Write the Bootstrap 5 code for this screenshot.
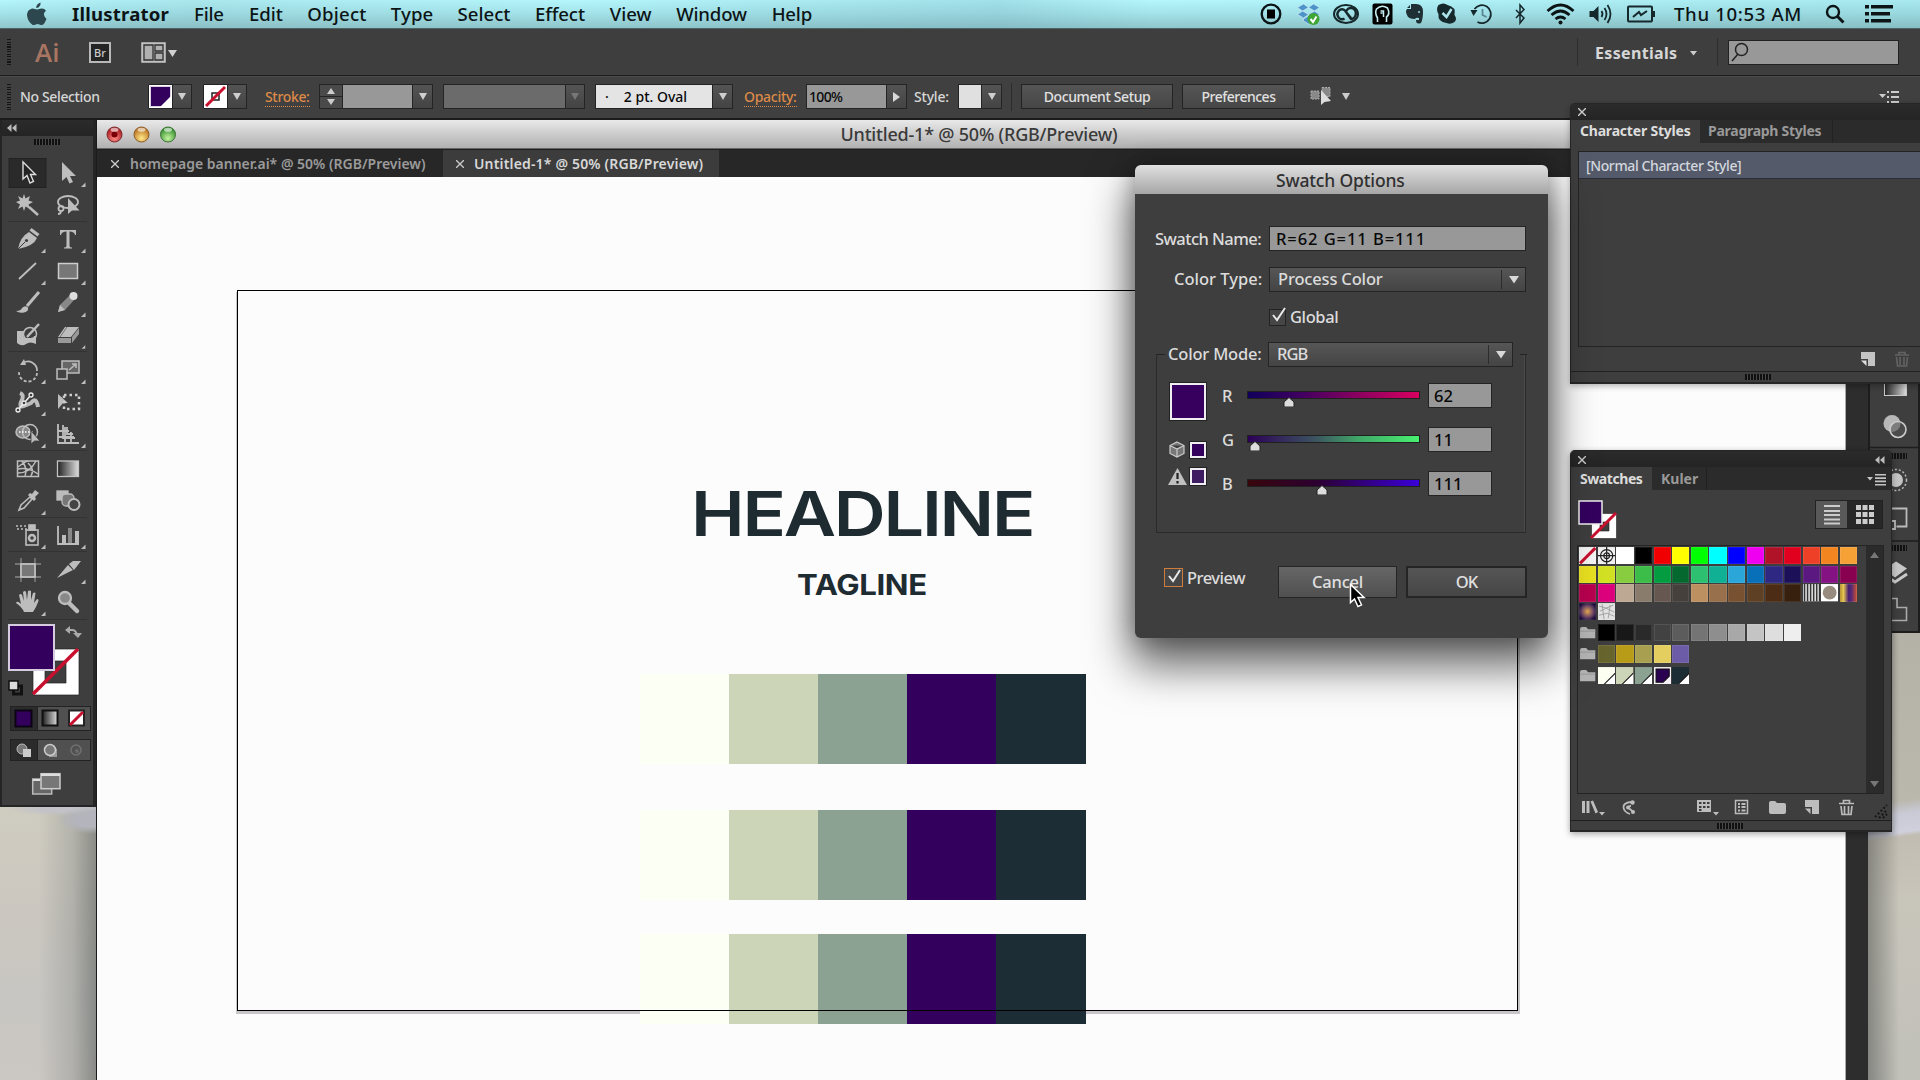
<!DOCTYPE html>
<html lang="en">
<head>
<meta charset="utf-8">
<title>Illustrator</title>
<link href="https://cdn.jsdelivr.net/npm/bootstrap@5.3.0/dist/css/bootstrap.min.css" rel="stylesheet">
<style>
:root{--ui:#3e3e3e;--edge:#1e1e1e;--ink:#d6d6d6;--violet:#33005e}
html,body{margin:0;width:1920px;height:1080px;overflow:hidden}
body{position:relative;font-family:"Noto Sans","Open Sans",sans-serif;font-weight:500;font-size:14px;line-height:1;color:var(--ink);background:#c4c3be}
svg{display:block;flex:none}
.fit{display:inline-block;white-space:pre;flex:none}
.win{position:absolute;display:flex;flex-direction:column}
.wall-l{left:0;top:806px;width:97px;height:274px;background:radial-gradient(ellipse 36px 14px at 92px 14px,#b4b5bc 50%,transparent),radial-gradient(ellipse 60px 7px at 66px 3px,#c2c2c8 40%,transparent),linear-gradient(90deg,transparent 40%,rgba(110,116,114,.28) 75%,rgba(80,86,84,.55)),linear-gradient(#cfccc0,#cbc7c0 40%,#c8c6c2 70%,#cbc7c2)}
.wall-r{left:1868px;top:632px;width:52px;height:448px;background:linear-gradient(90deg,rgba(60,64,62,.45),transparent 60%),linear-gradient(172deg,#b4b1a6,#bab7ac 38%,#c9cad6 41%,#d0d0dc 45%,#c2bdb2 46%,#c8c5bb 60%,#c1c0b9)}
/* menu bar */
.menubar{left:0;top:0;width:1920px;height:29px;color:#0c1416;font-size:18.6px;background:linear-gradient(90deg,rgba(255,255,255,0) 0,rgba(120,165,175,.18) 10%,rgba(255,255,255,0) 30%,rgba(110,160,180,.25) 52%,rgba(255,255,255,0) 60%,rgba(60,120,130,.1) 100%),linear-gradient(#b4f6fb,#a4e4ea 45%,#8fc6cb);border-bottom:1px solid #4d6467}
/* app bars */
.appbar{left:0;top:29px;width:1920px;height:47px;background:var(--ui);border-bottom:1px solid var(--edge)}
.optbar{left:0;top:76px;width:1920px;height:44px;padding-bottom:2px;background:#404040;border-top:1px solid #4b4b4b;border-bottom:2px solid #1c1c1c;font-size:14px}
.grip-v{width:4px;height:26px;background:repeating-linear-gradient(#161616 0 1px,transparent 1px 2.5px)}
.grip-h{width:26px;height:6px;background:repeating-linear-gradient(90deg,#101010 0 2px,#4a4a4a 2px 3px)}
.vline{width:1px;height:28px;background:#2c2c2c}
.ai-logo{font:600 26px/1 "Open Sans",sans-serif;color:#a87562}
.br-logo{width:22px;height:21px;border:2px solid #b9b9b9;background:#242424;font-size:11px;color:#ccc}
.find{width:171px;height:25px;background:#989898;border:1px solid #222}
.dd{background:linear-gradient(#545454,#444);border:1px solid #242424;height:25px}
.dd::after{content:"";border:4px solid transparent;border-top:7px solid #cfcfcf;border-bottom:0}
.dd.off::after{border-top-color:#777}
.dd.side::after{border:5px solid transparent;border-left:7px solid #d8d8d8;border-right:0}
.fld{height:25px;background:#989898;border:1px solid #242424;color:#080808}
.hot{color:#dd8a48;border-bottom:1px dotted #dd8a48;padding-bottom:2px}
.btn.flat{height:25px;border:1px solid #232323;border-radius:0;background:linear-gradient(#555,#464646);color:#e0e0e0;padding:0;font-size:14px;font-weight:500;line-height:1}
/* toolbox */
.toolbox{left:0;top:120px;width:96px;height:687px;background:var(--ui);border:1px solid #252525;border-width:0 3px 2px 2px}
.headbar{background:linear-gradient(#2b2b2b,#242424)}
.tsec{border-bottom:1px solid #333;margin:0 6px;display:grid;grid-template-columns:40px 40px;grid-auto-rows:32px}
.tool{width:40px;height:32px;color:#bdbdbd}
/* document */
.doc{left:96px;top:120px;width:1772px;height:960px;background:#2d2d2d;border-left:1px solid #1b1b1b}
.titlebar{height:29px;background:linear-gradient(#e9e9e9,#cfcfcf 45%,#b1b1b1);border-bottom:1px solid #666;color:#3a3a3a;font-size:18px}
.tabs{height:28px;background:#272727;border-top:1px solid #1e1e1e;font-size:14px;font-weight:600;color:#9b9b9b}
.tab-on{background:#3c3c3c;color:#d8d8d8}
.canvas{width:1749px;height:903px;background:#fdfcfd;border-right:1px solid #aaa}
.artboard{position:absolute;left:140px;top:170px;width:1281px;height:721px;border:1px solid #000}
.artboard-shade{position:absolute;left:139px;top:172px;width:1284px;height:722px;background:#fdfcfd;border:solid #c9c6c9;border-width:0 2px 3px 1px}
.artwork{position:absolute;left:543px;top:360px;width:447px}
.head-t{font-family:Inter,sans-serif;font-weight:600;font-size:62px;color:#1e2b31;height:46px}
.head-t .fit{transform:scaleX(1.16);transform-origin:left}
.tag-t{font-family:Inter,sans-serif;font-weight:700;font-size:28.3px;color:#1e2b31;height:21px}
.tag-t .fit{transform:scaleX(1.1);transform-origin:left}
.strip{display:grid;grid-template-columns:88.5px 89px 89px 89.5px 90px;height:90px}
/* dock */
.dock{left:1868px;top:384px;width:52px;height:249px;background:var(--ui);border:1px solid #1d1d1d;border-width:0 2px 2px 2px}
/* panels */
.panel{background:var(--ui);border:2px solid #262626;color:var(--ink)}
.panel .x-head{height:16px;border-radius:4px 4px 0 0}
.ptabs{height:23px;background:#2b2b2b;font-weight:700;font-size:14px;color:#999}
.ptabs .on{background:var(--ui);color:#ddd}
.char{left:1570px;top:103px;width:352px;height:281px;border-radius:5px 0 0 0;border-width:1px 0 2px 1px;box-shadow:0 2px 6px rgba(0,0,0,.3)}
.listbox{border:1px solid #242424}
.picked{background:#545a69;height:27px;border-bottom:1px solid #2a2d35;color:#d3d7de}
.swp{left:1570px;top:450px;width:322px;height:382px;border-width:1px 1px 2px 1px;border-radius:5px 5px 0 0;box-shadow:0 2px 6px rgba(0,0,0,.35)}
.cells{display:flex;gap:1.34px;height:17.4px}
.cells>*{width:17.3px;height:17.4px;flex:none}
.cells>i{box-shadow:inset 0 0 0 1px rgba(255,255,255,.09)}
/* dialog */
.dlg{left:1135px;top:165px;width:413px;height:473px;border-radius:6px;background:var(--ui);box-shadow:0 24px 44px 4px rgba(0,0,0,.6),0 0 24px rgba(0,0,0,.3);font-size:16.5px;color:#dcdcdc;overflow:visible}
.dlg-title{height:29px;padding-top:2px;border-radius:6px 6px 0 0;background:linear-gradient(#e0e0e0,#c9c9c9 40%,#a6a6a6);color:#303030;font-size:17.5px}
.dlg .fld{font-size:16.5px}
.pick{background:linear-gradient(#565656,#444);border:1px solid #242424;height:25px}
.cb{width:17px;height:17px;border:1px solid #232323;background:#464646}
.frame{border:1px solid #2a2a2a;border-top:0;box-shadow:inset -1px 0 #4a4a4a;margin-left:21px;width:370px;height:179px;position:relative}
.slide{width:173px;height:8px;border:1px solid #202020}
.knob{position:absolute;top:7px;width:12px;height:10px;margin-left:-6px}
.dlg .btn.flat{height:32px;font-size:16.5px;border-color:#252525}
.chip{border:2px solid #f0eef2;outline:1px solid #222}
</style>
</head>
<body>
<div class="win wall-l"></div>
<div class="win wall-r"></div>

<!-- document window -->
<main class="win doc">
  <div class="titlebar d-flex align-items-center position-relative justify-content-center">
    <svg class="position-absolute start-0" width="90" height="28" viewBox="0 0 90 28">
      <defs>
        <radialGradient id="lr" cx=".5" cy=".75" r=".7"><stop offset="0" stop-color="#ff8a86"/><stop offset="1" stop-color="#a3141b"/></radialGradient>
        <radialGradient id="ly" cx=".5" cy=".75" r=".7"><stop offset="0" stop-color="#ffe98a"/><stop offset="1" stop-color="#b66b18"/></radialGradient>
        <radialGradient id="lg" cx=".5" cy=".75" r=".7"><stop offset="0" stop-color="#c4f5a0"/><stop offset="1" stop-color="#2f8a2a"/></radialGradient>
      </defs>
      <circle cx="17.500" cy="14.500" r="7.500" fill="url(#lr)" stroke="#7c2a2c"/><circle cx="44.500" cy="14.500" r="7.500" fill="url(#ly)" stroke="#8a5a28"/><circle cx="71" cy="14.500" r="7.500" fill="url(#lg)" stroke="#3d7236"/>
      <circle cx="17.500" cy="14.500" r="3" fill="#7a0008"/><g fill="#fff" opacity=".6"><ellipse cx="17.500" cy="9.800" rx="4" ry="2"/><ellipse cx="44.500" cy="9.800" rx="4" ry="2"/><ellipse cx="71" cy="9.800" rx="4" ry="2"/></g>
    </svg>
    <span class="fit" data-w="277" style="margin-right:7px">Untitled-1* @ 50% (RGB/Preview)</span>
  </div>
  <div class="tabs d-flex">
    <div class="d-flex align-items-center" style="width:346px;padding-left:14px"><svg width="8" height="8" stroke="#ccc" stroke-width="1.300"><path d="M0 0l8 8M8 0l-8 8"/></svg><span class="fit" data-w="296" style="margin-left:11px">homepage banner.ai* @ 50% (RGB/Preview)</span></div>
    <div class="tab-on d-flex align-items-center" style="width:276px;padding-left:13px"><svg width="8" height="8" stroke="#ccc" stroke-width="1.300"><path d="M0 0l8 8M8 0l-8 8"/></svg><span class="fit" data-w="229" style="margin-left:10px">Untitled-1* @ 50% (RGB/Preview)</span></div>
  </div>
  <div class="canvas"></div>
  <div class="artboard-shade"></div>
  <div class="artwork d-flex flex-column">
    <div class="head-t d-flex align-items-center" style="margin-top:11px;padding-left:51px"><span class="fit" data-w="296.500">HEADLINE</span></div>
    <div class="tag-t d-flex align-items-center" style="margin-top:38px;padding-left:157px"><span class="fit" data-w="118">TAGLINE</span></div>
    <div class="strip" style="margin-top:78px"></div>
    <div class="strip" style="margin-top:46px"></div>
    <div class="strip" style="margin-top:34px"></div>
  </div>
  <div class="artboard"></div>
</main>

<!-- collapsed dock -->
<aside class="win dock">
  <svg width="48" height="247" viewBox="1870 384 48 247">
    <defs><linearGradient id="gd"><stop offset="0" stop-color="#222"/><stop offset="1" stop-color="#ddd"/></linearGradient></defs>
    <rect x="1884.500" y="374" width="22" height="21.500" fill="url(#gd)" stroke="#c8c8c8"/>
    <circle cx="1892" cy="423.500" r="8.500" fill="#b8b8b8"/><circle cx="1898" cy="429.500" r="8" fill="#555" fill-opacity=".6" stroke="#ccc" stroke-width="1.600"/>
    <path d="M1870 447.500h48M1870 541h48" stroke="#1e1e1e" stroke-width="1.500"/>
    <g fill="none" stroke="#111" stroke-width="6" stroke-dasharray="2 1"><path d="M1882 456h25M1882 548h25"/></g>
    <circle cx="1896" cy="480" r="7" fill="#c4c4c4"/><circle cx="1896" cy="480" r="10.500" fill="none" stroke="#bbb" stroke-width="1.500" stroke-dasharray="2 2"/>
    <path d="M1885 508.500h21.500v18h-10M1885 521h10v8h-10z" fill="none" stroke="#bbb" stroke-width="1.800"/>
    <path d="M1896 561.500l11 7-12 9-11-8z" fill="#c8c8c8"/><path d="M1886 576l9 6 12-8" fill="none" stroke="#c8c8c8" stroke-width="3"/>
    <path d="M1884 598.500h13v9h9.500v13h-20z" fill="none" stroke="#aaa" stroke-width="1.600"/>
  </svg>
</aside>

<!-- toolbox -->
<aside class="win toolbox">
  <div class="headbar d-flex align-items-center" style="height:16px;padding-left:5px"><svg width="10" height="8" fill="#bbb"><path d="M4.500 0v8L0 4zM9.500 0v8L5 4z"/></svg></div>
  <div class="d-flex justify-content-center" style="height:21px;padding:3px 2px 0 0"><div class="grip-h"></div></div>
  <div class="tsec" style="height:65px">
    <svg class="tool" viewBox="-20 -16 40 32"><rect x="-19" y="-14.500" width="37" height="29" fill="#2a2a2a" stroke="#222"/><path d="M-5-11V6l4-3.500 3 7.500 3.500-1.500L2.500 1.500h5z" fill="#222" stroke="#ddd" stroke-width="1.400"/></svg>
    <svg class="tool" viewBox="-20 -16 40 32" fill="currentColor"><path d="M-6-11V8l4.500-4 3 6.500 3.500-1.500L2 3h6zM13 14h4.500V9.500z"/></svg>
    <svg class="tool" viewBox="-20 -16 40 32" fill="currentColor"><path d="M-4-11l1.500 4.500L2-9 .5-4.500 5-3 .5-.5 2 4-2.500 1.500-4 6-5.500 1.500-10 4-8-.5-12-3l4-1.500L-10-9l4.500 2.500z"/><path d="M1 2l9 8" stroke="currentColor" stroke-width="2.500"/></svg>
    <svg class="tool" viewBox="-20 -16 40 32" fill="none" stroke="currentColor" stroke-width="1.800"><ellipse cx="0" cy="-3" rx="10" ry="6"/><circle cx="-7" cy="3.500" r="2.500"/><path d="M-7 6q0 3-3 3"/><path d="M0-7V9l4-3.500 7.500 0z" fill="currentColor" stroke="none"/></svg>
  </div>
  <div class="tsec" style="height:130px;padding-top:1px">
    <svg class="tool" viewBox="-20 -16 40 32" fill="currentColor"><path d="M-10 10Q-8-2 1-7l8 6Q6 7-10 10zM1.500-8.500l2-2.500 8 6-2 2.500zM13 14h4.500V9.500z"/><path d="M-10 10l7-7" stroke="#3e3e3e"/><circle cx="-1.500" cy="1.500" r="1.600" fill="#3e3e3e"/></svg>
    <svg class="tool" viewBox="-20 -16 40 32" fill="currentColor"><path d="M-8-9H8v5H7Q6.500-7.500 1.500-7.500V7q0 1.500 2.500 1.500v1h-8v-1q2.500 0 2.500-1.500V-7.500Q-6.500-7.500-7-4h-1zM13 14h4.500V9.500z"/></svg>
    <svg class="tool" viewBox="-20 -16 40 32" fill="currentColor"><path d="M-9 8L8-8" stroke="currentColor" stroke-width="1.800"/><path d="M13 14h4.500V9.500z"/></svg>
    <svg class="tool" viewBox="-20 -16 40 32"><rect x="-9.500" y="-7.500" width="19" height="15" fill="#777" stroke="#ccc" stroke-width="1.500"/><path fill="#bdbdbd" d="M13 14h4.500V9.500z"/></svg>
    <svg class="tool" viewBox="-20 -16 40 32" fill="currentColor"><path d="M11-11L-1 3" stroke="currentColor" stroke-width="3"/><path d="M-12 8q5 0 6-3 3-3 6-.500 1 4-4 5-5 1-8-1.500z"/></svg>
    <svg class="tool" viewBox="-20 -16 40 32" fill="currentColor"><path d="M-10 9l2-7L2-8l5 4L-3 7z" fill="#888"/><path d="M-10 9l2-7 5 5z"/><circle cx="5.500" cy="-7" r="4" fill="#ddd"/><path d="M13 14h4.500V9.500z"/></svg>
    <svg class="tool" viewBox="-20 -16 40 32" fill="currentColor"><path d="M-11-4h8Q-8 4 0 3q6 0 6-2h2v8Q2 6-2 9t-9-1z"/><path d="M11-11L-1 2" stroke="currentColor" stroke-width="2.500"/><circle cx="2" cy="-1" r="6.500" fill="none" stroke="currentColor" stroke-width="1.500"/></svg>
    <svg class="tool" viewBox="-20 -16 40 32" fill="currentColor"><path d="M-3-8h14L3 2h-13z" /><path d="M-10 3h13v5h-13zM4 2l7-9v6L4 8z" fill="#999"/><path d="M-1-8l-7 10M13 14h4.500V9.500z" stroke="#3e3e3e" stroke-width=".6"/></svg>
  </div>
  <div class="tsec" style="height:99px;padding-top:2px">
    <svg class="tool" viewBox="-20 -16 40 32" fill="none" stroke="currentColor" stroke-width="1.800"><path d="M-5-7A9 9 0 0 1 9 1"/><path d="M9 3A9 9 0 0 1-9 2" stroke-dasharray="3 2"/><path d="M-8-5l4-6 2 6z" fill="currentColor" stroke="none"/><path fill="currentColor" stroke="none" d="M13 14h4.500V9.500z"/></svg>
    <svg class="tool" viewBox="-20 -16 40 32" fill="#666" stroke="currentColor" stroke-width="1.500"><rect x="-6" y="-9" width="17" height="12"/><rect x="-11" y="-1" width="10" height="10" fill="#444"/><path d="M1 0l7-6M4-6h4v4"/><path fill="#bdbdbd" stroke="none" d="M13 14h4.500V9.500z"/></svg>
    <svg class="tool" viewBox="-20 -16 40 32" fill="none" stroke="currentColor" stroke-width="4"><path d="M-8-9q5 2 1 9-2 6 3 4T3 1Q8-6 10 5"/><path d="M-10 8L3-7" stroke="#eee" stroke-width="1.500"/><g fill="#3e3e3e" stroke="#eee" stroke-width="1.300"><circle cx="-10" cy="8" r="2"/><circle cx="-4" cy="1" r="2"/><circle cx="3" cy="-7" r="2"/></g><path fill="currentColor" stroke="none" d="M13 14h4.500V9.500z"/></svg>
    <svg class="tool" viewBox="-20 -16 40 32" fill="currentColor"><path d="M-10-8L0 1h-5l-5 6z"/><g fill="none" stroke="#ccc" stroke-width="2.500" stroke-dasharray="2.500 3"><path d="M-4-7H11V7H-4z"/></g></svg>
    <svg class="tool" viewBox="-20 -16 40 32" fill="none" stroke="currentColor" stroke-width="1.500"><ellipse cx="-5" cy="-2" rx="7" ry="6" fill="#888"/><circle cx="2" cy="-2" r="7.500"/><path d="M-9-2H5" stroke-dasharray="1.500 1.500" stroke="#fff"/><path d="M3-3V10l3.500-3 5.500 0z" fill="currentColor" stroke="#3e3e3e" stroke-width=".8"/><path fill="currentColor" stroke="none" d="M13 14h4.500V9.500z"/></svg>
    <svg class="tool" viewBox="-20 -16 40 32" fill="none" stroke="currentColor" stroke-width="1.800"><path d="M-10-10v19h21M-5-9V4H7M-1-7v7h6M-10-3h11M-10 3h16M-3-7v15M3-2v10"/><path fill="currentColor" stroke="none" d="M13 14h4.500V9.500z"/></svg>
  </div>
  <div class="tsec" style="height:67px;padding-top:2px">
    <svg class="tool" viewBox="-20 -16 40 32" fill="none" stroke="currentColor" stroke-width="1.500"><rect x="-10.500" y="-8" width="21" height="15.500"/><path d="M-10-2Q-2-8 0-8M-10 4Q2 4 8-8M-6-8Q0 0-3 7M0-6q7 6 3 13M-10 0q10-2 20 5"/></svg>
    <svg class="tool" viewBox="-20 -16 40 32"><rect x="-10.500" y="-8" width="21" height="15.500" fill="url(#gd)" stroke="#c4c4c4" stroke-width="1.300"/></svg>
    <svg class="tool" viewBox="-20 -16 40 32" fill="currentColor"><path d="M-9 9l2-5L2-4l2 2-8 9z" fill="none" stroke="currentColor" stroke-width="1.600"/><path d="M0-6l2-2 2 1 3-4 4 3-4 4 1 2-2 2zM13 14h4.500V9.500z"/></svg>
    <svg class="tool" viewBox="-20 -16 40 32" stroke="currentColor" stroke-width="1.300"><rect x="-11" y="-10" width="11" height="9" fill="#bbb"/><rect x="-6" y="-7" width="12" height="12" rx="4" fill="#777"/><circle cx="6" cy="3.500" r="5.500" fill="#444" stroke-width="2"/></svg>
  </div>
  <div class="tsec" style="height:34px;padding-top:1px">
    <svg class="tool" viewBox="-20 -16 40 32" fill="none" stroke="currentColor" stroke-width="1.600"><rect x="-2" y="-5" width="12" height="15"/><rect x="1" y="-10" width="6" height="5" fill="currentColor"/><circle cx="4" cy="3" r="3" stroke-width="2.500"/><path d="M-12-9h11M-11-6h10" stroke-dasharray="2 2"/><path fill="currentColor" stroke="none" d="M13 14h4.500V9.500z"/></svg>
    <svg class="tool" viewBox="-20 -16 40 32" fill="currentColor"><path d="M-10-9V9H11" fill="none" stroke="currentColor" stroke-width="1.800"/><path d="M-6 0h4v8h-4zM7-4h4V8H7zM13 14h4.500V9.500z"/><path d="M0-7h4V8H0z" fill="#888"/></svg>
  </div>
  <div class="tsec" style="height:68px;padding-top:2px">
    <svg class="tool" viewBox="-20 -16 40 32" fill="none"><path d="M-7-12v24M7-12v24M-13-6h26M-13 7h26" stroke="#888" stroke-width="1.300"/><rect x="-7" y="-6" width="14" height="13" fill="#777" stroke="#ccc" stroke-width="1.500"/></svg>
    <svg class="tool" viewBox="-20 -16 40 32" fill="currentColor"><path d="M-11 8L0-5l5 5zM1-6l4-3h8L6 0zM13 14h4.500V9.500z"/></svg>
    <svg class="tool" viewBox="-20 -16 40 32" fill="currentColor"><path d="M-4 10q-2-5-8-9 1-3 5 1L-9-7q2-2 3 0l2 6-1-9q2-2 3 0l1 8 1-9q2-1 3 0L3-2l2-7q2-1 2.500 0L6 1l3-4q2 0 1.500 2Q8 6 5 10zM13 14h4.500V9.500z"/></svg>
    <svg class="tool" viewBox="-20 -16 40 32" fill="none"><path d="M1 1l8 8" stroke="currentColor" stroke-width="4.500" stroke-linecap="round"/><circle cx="-3" cy="-4" r="6" fill="#888" stroke="currentColor" stroke-width="2.300"/></svg>
  </div>
  <svg width="91" height="184" viewBox="3 621 91 184">
    <path d="M34 650h46v46H34zM46 662v22h21v-22z" fill="#fff" fill-rule="evenodd" stroke="#222" stroke-width=".7"/><path d="M34 695L79 650" stroke="#c8102e" stroke-width="3.500"/>
    <rect x="10" y="626" width="45" height="45" fill="#33005e" stroke="#d6cce0" stroke-width="2"/>
    <g fill="none" stroke="#aaa" stroke-width="2"><path d="M69 631h4q4 0 5 5"/></g><path d="M66 631l5-4v8zM74 634h9l-4 5z" fill="#aaa"/>
    <rect x="14.500" y="687" width="8" height="8" fill="none" stroke="#111" stroke-width="3"/><rect x="10" y="682" width="9" height="9" fill="#ddd" stroke="#111" stroke-width="1.500"/>
    <g transform="translate(1 1)">
    <g stroke="#222"><rect x="10.500" y="706.500" width="80" height="24" fill="#505050"/><rect x="10.500" y="706.500" width="27" height="24" fill="#2b2b2b"/><rect x="15.500" y="710.500" width="16" height="16" fill="#33005e" stroke="#0c0414" stroke-width="2"/><rect x="42.500" y="710.500" width="15" height="15" fill="url(#gd)" stroke-width="2" stroke="#111"/><rect x="69" y="710.500" width="15" height="15" fill="#fff" stroke-width="2"/></g><path d="M70 725l13-13" stroke="#c8102e" stroke-width="3"/>
    <g stroke="#222"><rect x="10.500" y="739.500" width="80" height="21" fill="#505050"/><rect x="10.500" y="739.500" width="27" height="21" fill="#2b2b2b"/></g>
    <circle cx="22" cy="749" r="5" fill="#777" stroke="#bbb"/><rect x="23" y="749" width="8" height="8" fill="#ccc"/><rect x="49" y="749" width="8" height="8" fill="#999"/><circle cx="50" cy="750" r="5.500" fill="#777" stroke="#ccc" stroke-width="1.500"/><circle cx="76" cy="750" r="5" fill="none" stroke="#707070" stroke-width="1.500"/><circle cx="77" cy="751" r="2" fill="#6a6a6a"/>
    <rect x="32.700" y="779" width="19" height="15" fill="#666" stroke="#bbb" stroke-width="1.500"/><rect x="41" y="773.700" width="19" height="15" fill="#777" stroke="#ccc" stroke-width="1.500"/><path d="M41 775h19M33 780h7" stroke="#ddd" stroke-width="2"/>
    </g>
  </svg>
</aside>

<!-- application bar -->
<div class="win appbar flex-row align-items-center">
  <div class="grip-v" style="margin-left:7px"></div>
  <span class="ai-logo fit" data-w="24" style="margin-left:24px">Ai</span>
  <div class="br-logo d-flex align-items-center justify-content-center" style="margin-left:30px">Br</div>
  <svg width="37" height="21" style="margin-left:30px"><path d="M1 1h23v19H1z" fill="#aaa" stroke="#c8c8c8" stroke-width="1.500"/><path d="M3 3h9v15H3zM14 3h8v6h-8zM14 11h8v7h-8z" fill="#b0b0b0" stroke="#333" stroke-width="1.300"/><path d="M27 8h9l-4.500 7z" fill="#d0d0d0"/></svg>
  <div class="vline ms-auto"></div>
  <span class="fit fw-bold" data-w="82" style="margin:2px 0 0 17px;font-size:16px">Essentials</span>
  <svg width="8" height="5" style="margin:2px 0 0 13px"><path d="M0 0h7L3.500 4.500z" fill="#ccc"/></svg>
  <div class="vline" style="margin-left:19px"></div>
  <div class="find" style="margin:0 21px 0 10px"><svg width="22" height="23" fill="none" stroke="#222" stroke-width="1.500"><circle cx="12.500" cy="8.500" r="6"/><path d="M9 13l-6 7"/></svg></div>
</div>

<!-- control bar -->
<div class="win optbar flex-row align-items-center">
  <div class="grip-v" style="margin-left:7px"></div>
  <span class="fit" data-w="80" style="margin-left:9px">No Selection</span>
  <svg width="25" height="25" style="margin-left:48px"><path d="M.5.500h24v24H.5z" fill="#fff" stroke="#222"/><path d="M2.500 2.500h20v11l-9 9h-11z" fill="#33005e" stroke="#d9d0e2"/><path d="M23 12v11H12z" fill="#fff"/></svg>
  <div class="dd d-flex align-items-center justify-content-center" style="width:20px;margin-left:-1px"></div>
  <svg width="25" height="25" style="margin-left:11px"><path d="M.5.500h24v24H.5z" fill="#fff" stroke="#222"/><path d="M9 9h7v7H9z" fill="none" stroke="#222" stroke-width="1.500"/><path d="M3 22L22 3" stroke="#c8102e" stroke-width="3"/></svg>
  <div class="dd d-flex align-items-center justify-content-center" style="width:20px;margin-left:-1px"></div>
  <span class="fit hot" data-w="45" style="margin-left:18px;margin-top:3px">Stroke:</span>
  <svg width="24" height="25" style="margin-left:9px"><path d="M.5.500h23v24H.5zM0 12.500h24" fill="#4a4a4a" stroke="#242424"/><path d="M8 10h8l-4-6zM8 15h8l-4 6z" fill="#ccc"/></svg>
  <div class="fld" style="width:71px;margin-left:-1px"></div>
  <div class="dd d-flex align-items-center justify-content-center" style="width:21px;margin-left:-1px"></div>
  <div class="fld" style="width:123px;margin-left:10px;background:#6b6b6b"></div>
  <div class="dd off d-flex align-items-center justify-content-center" style="width:20px;margin-left:-1px"></div>
  <div class="fld d-flex align-items-center" style="width:118px;margin-left:10px;background:#e4e4e4;padding-left:9px"><span>·</span><span class="fit" data-w="63" style="margin-left:15px">2 pt. Oval</span></div>
  <div class="dd d-flex align-items-center justify-content-center" style="width:21px;margin-left:-1px"></div>
  <span class="fit hot" data-w="53" style="margin-left:11px;margin-top:3px">Opacity:</span>
  <div class="fld d-flex align-items-center" style="width:81px;margin-left:9px;padding-left:2px"><span class="fit" data-w="34">100%</span></div>
  <div class="dd side d-flex align-items-center justify-content-center" style="width:21px;margin-left:-1px"></div>
  <span class="fit" data-w="35" style="margin-left:7px">Style:</span>
  <div class="fld" style="width:24px;margin-left:9px;background:#e0e0e0"></div>
  <div class="dd d-flex align-items-center justify-content-center" style="width:21px;margin-left:-1px"></div>
  <div class="vline" style="margin-left:9px"></div>
  <button class="btn flat d-flex align-items-center justify-content-center" style="width:152px;margin-left:9px"><span class="fit" data-w="107">Document Setup</span></button>
  <button class="btn flat d-flex align-items-center justify-content-center" style="width:113px;margin-left:9px"><span class="fit" data-w="74">Preferences</span></button>
  <svg width="42" height="22" style="margin-left:15px"><path d="M1 5h8v8H1zM12 1.500h8v9h-8z" fill="#888" stroke="#aaa" stroke-dasharray="2 1"/><path d="M11 4v15l3.500-3L21 15z" fill="#ddd"/><path d="M32 7h8l-4 7z" fill="#ccc"/></svg>
  <svg width="20" height="12" style="margin:0 21px 0 auto"><path d="M0 3h7L3.500 7zM8 0h2v2H8zM8 5h2v2H8zM8 10h2v2H8zM12 0h8v2h-8zM12 5h8v2h-8zM12 10h8v2h-8z" fill="#ccc"/></svg>
</div>

<!-- menu bar -->
<nav class="win menubar flex-row align-items-center">
  <svg width="22" height="24" viewBox="0 0 22 24" style="margin-left:26px"><path d="M14.500.5q.5 3-1.500 4.500-1 1-2.800 1Q10 2 14.500.5zM11 7.500q1.500 0 3-.7 4-1 6 2-4.500 3.500.5 8Q18.500 22.500 16 23q-1.200 0-2.500-.6-2-.7-3.800 0-2 .9-3 .5Q2 20 1 13.500 1 8 5.500 6.700q1.800-.3 3.300.4 1 .4 2.200.4z" fill="#2c474d"/></svg>
  <span class="fit fw-bold" data-w="97" style="margin-left:24px">Illustrator</span>
  <div class="d-flex" style="gap:24.400px;margin-left:25px">
    <span class="fit" data-w="30.500">File</span><span class="fit" data-w="34">Edit</span><span class="fit" data-w="59">Object</span><span class="fit" data-w="42.500">Type</span><span class="fit" data-w="53">Select</span><span class="fit" data-w="50.500">Effect</span><span class="fit" data-w="42">View</span><span class="fit" data-w="71">Window</span><span class="fit" data-w="40.500">Help</span>
  </div>
  <div class="d-flex ms-auto">
    <svg width="38" height="28" viewBox="-19 -14 38 28"><circle r="9.300" fill="none" stroke="#0c1416" stroke-width="2.300"/><rect x="-4" y="-4.500" width="8" height="9"/></svg>
    <svg width="37" height="28" viewBox="-18.500 -14 37 28"><g fill="#4d93c7" stroke="#d8f0fb" stroke-width=".6"><path d="M-5-10L0-6.500-6-3-11-6.500zM5-10l6 3.500L6-3 0-6.500zM-6-3l6 3.500L-5 4l-6-3.500zM6-3l5 3.500L5 4 0 .5z"/><path d="M0 2l5 3v3L0 10l-5-3V5z"/></g><circle cx="5" cy="5" r="6" fill="#3fa535"/><path d="M2 5l2.500 3L8 2.500" fill="none" stroke="#fff" stroke-width="2"/></svg>
    <svg width="38" height="28" viewBox="-19 -14 38 28" fill="none" stroke="#15282c" stroke-width="2"><ellipse rx="12" ry="9"/><path d="M-1.500 4.500A4.500 5 0 1 1-1-3.500L5 5A5 5.500 0 1 0 0-2L5 4" stroke-width="2.400"/></svg>
    <svg width="35" height="28" viewBox="-17.500 -14 35 28"><rect x="-10" y="-10.500" width="20" height="21" rx="2"/><path d="M-5 8V4q-3-5-1-9 5-5 11-1 3 6-1 9v5" fill="none" stroke="#c8eef2" stroke-width="1.600"/><path d="M-2-3h3v6M-2-1h2" stroke="#c8eef2" stroke-width="1.500" fill="none"/></svg>
    <svg width="30" height="28" viewBox="-15 -14 30 28"><path d="M-4-10h5q7 0 7 8 0 7-2 11-5 2-5-3h3V4Q1 3 0 5q-7 0-8-4-2-4 0-6h4zM-5-9v3h-3z" fill="#1f3034"/><circle cx="4" cy="-2" r="1" fill="#9dd"/></svg>
    <svg width="33" height="28" viewBox="-16.500 -14 33 28"><path d="M-8-9Q-3-12 1-9q9 2 7 10 3 4 0 7-4 3-8 1-9-1-8-9-3-5 0-9z" fill="#15282c"/><path d="M-4-1l4 4 5-8" fill="none" stroke="#aee5ea" stroke-width="2.500"/></svg>
    <svg width="37" height="28" viewBox="-18.500 -14 37 28" fill="none" stroke="#15282c" stroke-width="1.800"><path d="M-7-5A9 9 0 1 1-4 8"/><path d="M-11-4h7l-4 6z" fill="#15282c" stroke="none"/><path d="M1-5v6l4 2" stroke="#558890"/></svg>
    <svg width="40" height="28" viewBox="-20 -14 40 28" fill="none" stroke="#15282c" stroke-width="1.500"><path d="M-4-4L4 4l-4 5V-9l4 4.500L-4 4"/></svg>
    <svg width="41" height="28" viewBox="-20.500 -14 41 28" fill="none" stroke="#0c1416" stroke-width="2.800"><path d="M-13-3Q0-15 13-3M-9 1Q0-7 9 1M-5 5Q0 1 5 5"/><circle cy="8.500" r="2" fill="#0c1416" stroke="none"/></svg>
    <svg width="39" height="28" viewBox="-19.500 -14 39 28" fill="none" stroke="#15282c" stroke-width="1.800"><path d="M-11-3h4l5-5V8l-5-5h-4z" fill="#15282c" stroke="none"/><path d="M1-3q2 3 0 6M4-6q4 6 0 12M7-9q6 9 0 18"/></svg>
    <svg width="42" height="28" viewBox="-21 -14 42 28" fill="none" stroke="#15282c" stroke-width="2"><rect x="-13" y="-7.500" width="24" height="15" rx="1"/><path d="M13-3v6"/><path d="M-8 3l6-5 2 3 6-4"/></svg>
  </div>
  <span class="fit" data-w="127" style="margin-left:12px">Thu 10:53 AM</span>
  <svg width="20" height="20" style="margin-left:24px" fill="none" stroke="#0c1416"><circle cx="8" cy="8" r="6" stroke-width="2.400"/><path d="M12.500 12.500l6 6" stroke-width="3"/></svg>
  <svg width="28" height="18" style="margin:0 27px 0 20px" fill="#0c1416"><path d="M0 0h4v3.500H0zM0 7h4v3.500H0zM0 14h4v3.500H0zM6 0h22v3.500H6zM6 7h19v3.500H6zM6 14h20v3.500H6z"/></svg>
</nav>

<!-- character styles panel -->
<section class="win panel char">
  <div class="headbar x-head d-flex align-items-center" style="padding-left:7px"><svg width="8" height="8" stroke="#ccc" stroke-width="1.400"><path d="M0 0l8 8M8 0l-8 8"/></svg></div>
  <div class="ptabs d-flex"><div class="on d-flex align-items-center" style="width:129px;padding:0 0 1px 9px"><span class="fit" data-w="111">Character Styles</span></div><div class="d-flex align-items-center" style="width:133px;padding:0 0 1px 8px;border-right:1px solid #222"><span class="fit" data-w="114">Paragraph Styles</span></div></div>
  <div class="listbox" style="margin:8px 0 0 7px;height:196px"><div class="picked d-flex align-items-center" style="padding:2px 0 0 7px"><span class="fit" data-w="156">[Normal Character Style]</span></div></div>
  <div class="d-flex align-items-center" style="height:24px;padding-left:290px">
    <svg width="14" height="14"><path d="M0 0h14v14H7V7H0z" fill="#c4c4c4"/><path d="M0 8.500h5.500V14z" fill="#ddd"/></svg>
    <svg width="16" height="16" style="margin-left:19px" fill="none" stroke="#636363" stroke-width="1.600"><path d="M1 4h14M5 4V1.500h6V4M2.500 6l1 9h9l1-9M6 6v8M10 6v8"/></svg>
  </div>
  <div class="d-flex flex-fill" style="border-top:1px solid #222;padding:2px 0 0 174px"><div class="grip-h"></div></div>
</section>

<!-- swatches panel -->
<section class="win panel swp">
  <div class="headbar x-head d-flex align-items-center justify-content-between" style="padding:1px 6px 0 7px"><svg width="8" height="8" stroke="#ccc" stroke-width="1.400"><path d="M0 0l8 8M8 0l-8 8"/></svg><svg width="10" height="8" fill="#bbb"><path d="M4.500 0v8L0 4zM9.500 0v8L5 4z"/></svg></div>
  <div class="ptabs d-flex"><div class="on d-flex align-items-center" style="width:81px;padding-left:9px"><span class="fit" data-w="63">Swatches</span></div><div class="d-flex align-items-center" style="width:55px;padding-left:9px;border-right:1px solid #222"><span class="fit" data-w="37">Kuler</span></div>
    <svg class="ms-auto" width="19" height="12" style="margin:7px 5px 0 0"><path d="M0 3h6L3 6.500zM8 0h11v1.600H8zM8 3.300h11v1.600H8zM8 6.600h11v1.600H8zM8 10h11v1.600H8z" fill="#c4c4c4"/></svg></div>
  <div class="d-flex justify-content-between align-items-start" style="height:55px;padding:10px 8px 0 7px">
    <svg width="42" height="40" viewBox="1 1 42 40"><path d="M14.500 14.500h25v25h-25zM23 23v9h9v-9z" fill="#fff" fill-rule="evenodd" stroke="#222" stroke-width=".6"/><path d="M14 39L39 14" stroke="#c8102e" stroke-width="3"/><rect x="2" y="2" width="23" height="23" fill="#33005e" stroke="#eee" stroke-width="1.500"/></svg>
    <svg width="68" height="29"><rect x=".5" y=".5" width="67" height="28" fill="#282828" stroke="#222"/><rect x="1" y="1" width="31" height="27" fill="#595959"/><path d="M9 5h16v2H9zM9 10h16v2H9zM9 14h16v2H9zM9 18.500h16v2H9zM9 22.500h16v2H9z" fill="#ccc"/><path d="M41 5h5v5h-5zM47.500 5h5v5h-5zM54 5h5v5h-5zM41 12h5v5h-5zM47.500 12h5v5h-5zM54 12h5v5h-5zM41 19h5v5h-5zM47.500 19h5v5h-5zM54 19h5v5h-5z" fill="#ccc"/></svg>
  </div>
  <div class="listbox d-flex" style="margin:0 7px 0 6px;height:249px">
    <div id="grid" class="flex-fill" style="padding:1px 0 0 1px"></div>
    <svg width="17" height="247" style="background:#2b2b2b"><path d="M4 12h9L8.500 6zM4 235h9l-4.500 6z" fill="#777"/></svg>
  </div>
  <div class="d-flex" style="height:26px">
    <svg width="318" height="26" viewBox="1571 794 318 26" fill="#bdbdbd">
      <path d="M1582 801h3v12h-3zM1586.500 801h3v12h-3zM1590.500 801.500l2.500-1 5 11.500-2.500 1.500zM1599 812h6l-3 3.500zM1713 812h6l-3 3.500z"/>
      <path d="M1631 802q-8 1-7.500 5.500T1630 814M1631 806q-3 0-2.500 2l5 4" fill="none" stroke="#bbb" stroke-width="1.800"/><circle cx="1632.500" cy="802.500" r="2.200"/><circle cx="1628" cy="807.500" r="2"/><circle cx="1633" cy="812" r="2"/>
      <path d="M1697 800h14v12h-14z"/><path d="M1699 802h2.500v2h-2.500zM1703 806h2.500v2h-2.500zM1707 802h2.500v2h-2.500zM1699 806h2.500v2h-2.500zM1703 802h2.500v2h-2.500zM1707 806h2.500v2h-2.500zM1699 809h2.500v2h-2.500z" fill="#3c3c3c"/>
      <path d="M1735.500 800.500h12v13h-12z" fill="none" stroke="#bbb" stroke-width="1.500"/><path d="M1738 803h2v2h-2zM1741.500 803h4v2h-4zM1738 806h2v2h-2zM1741.500 806h4v2h-4zM1738 809.500h2v2h-2zM1741.500 809.500h4v2h-4z"/>
      <path d="M1769 803q0-2 2-2h4l2 2h7q2 0 2 2v7q0 2-2 2h-13q-2 0-2-2z"/>
      <path d="M1805 800h14v14h-7v-7h-7zM1805 808.500h5.500v5.500z"/>
      <path d="M1839 803.500h15M1843.500 803v-2.500h6v2.500M1841 806l1 8.500h9l1-8.500M1844.500 806v8M1848.500 806v8" fill="none" stroke="#bbb" stroke-width="1.700"/>
      <path d="M1875 817L1887 805M1879 818l8-8M1883 818l4-4" stroke="#161616" stroke-width="2" stroke-dasharray="2 2"/>
    </svg>
  </div>
  <div class="d-flex flex-fill" style="border-top:1px solid #1e1e1e;padding:2px 0 0 146px"><div class="grip-h"></div></div>
</section>

<!-- swatch options dialog -->
<section class="win dlg">
  <div class="dlg-title d-flex align-items-center" style="padding-left:141px"><span class="fit" data-w="129">Swatch Options</span></div>
  <div class="d-flex align-items-center" style="margin-top:32px;padding-left:20px;height:25px"><span class="fit" data-w="107" style="margin-top:1px">Swatch Name:</span><div class="fld d-flex align-items-center" style="width:257px;margin-left:7px;padding:1px 0 0 6px"><span class="fit" data-w="149">R=62 G=11 B=111</span></div></div>
  <div class="d-flex align-items-center" style="margin-top:16px;padding-left:39px;height:25px"><span class="fit" data-w="88">Color Type:</span><div class="pick d-flex align-items-center" style="width:257px;margin-left:7px;padding-left:8px"><span class="fit" data-w="105">Process Color</span><svg class="ms-auto" width="25" height="23"><path d="M1.500 2v19" stroke="#2c2c2c"/><path d="M9 8h10l-5 7.500z" fill="#d8d8d8"/></svg></div></div>
  <div class="d-flex align-items-center" style="margin-top:15px;padding-left:134px;height:20px"><div class="cb"><svg width="17" height="15" fill="none" stroke="#e8e8e8" stroke-width="2" style="overflow:visible"><path d="M3 5l4 5 8-12"/></svg></div><span class="fit" data-w="49" style="margin-left:4px">Global</span></div>
  <div class="d-flex align-items-center position-relative" style="margin-top:15px;padding-left:33px;height:25px"><span class="fit" data-w="94">Color Mode:</span><div class="pick d-flex align-items-center" style="width:245px;margin-left:6px;padding-left:8px"><span class="fit" data-w="31">RGB</span><svg class="ms-auto" width="25" height="23"><path d="M1.500 2v19" stroke="#2c2c2c"/><path d="M9 8h10l-5 7.500z" fill="#d8d8d8"/></svg></div></div>
  <div class="frame d-flex" style="margin-top:-13px;padding:29px 0 0 12px">
    <svg class="position-absolute top-0 start-0" width="370" height="1"><path d="M0 .5h8M363 .5h7" stroke="#242424"/></svg>
    <div style="width:53px">
      <div class="chip" style="width:36px;height:37px;background:#37005f;margin-left:1px"></div>
      <div class="d-flex justify-content-between align-items-center" style="margin-top:21px;width:37px"><svg width="16" height="17" fill="#777" stroke="#ccc" stroke-width="1.200"><path d="M8 1l7 3.500v8L8 16l-7-3.500v-8zM1 4.500L8 8l7-3.500M8 8v8"/></svg><div class="chip" style="width:16px;height:16px;background:#33005e"></div></div>
      <div class="d-flex justify-content-between align-items-center" style="margin-top:10px;width:38px;margin-left:-1px"><svg width="19" height="17"><path d="M9.500 0L19 17H0z" fill="#c0c0c0"/><path d="M9.500 5v6M9.500 13v2.500" stroke="#222" stroke-width="2.200"/></svg><div class="chip" style="width:16px;height:17px;background:#3e1c62"></div></div>
    </div>
    <div id="channels" class="d-flex flex-column" style="gap:19px"></div>
  </div>
  <div class="d-flex align-items-center" style="margin-top:33px;padding-left:29px;height:32px">
    <div class="cb" style="width:19px;height:19px;border:1.500px solid #cf7c3c;margin-top:-10px"><svg width="17" height="16" fill="none" stroke="#e8e8e8" stroke-width="2"><path d="M4 7l4 5 7-11"/></svg></div>
    <span class="fit" data-w="58" style="margin:-8px 0 0 4px">Preview</span>
    <button class="btn flat d-flex align-items-center justify-content-center" style="width:119px;margin-left:33px;background:linear-gradient(#666,#505050)"><span class="fit" data-w="51">Cancel</span></button>
    <button class="btn flat d-flex align-items-center justify-content-center" style="width:121px;margin-left:9px;border-width:2px"><span class="fit" data-w="22">OK</span></button>
  </div>
  <svg class="position-absolute" width="18" height="26" style="left:214px;top:418px"><path d="M1.500 1.500v18l4-3.500 3.500 7.500 3.500-1.700L9 14.500h6z" fill="#000" stroke="#fff" stroke-width="1.500"/></svg>
</section>

<script src="https://cdn.jsdelivr.net/npm/bootstrap@5.3.0/dist/js/bootstrap.bundle.min.js"></script>
<script>
// palette strips on the artboard
const palette = ['#fcfff3','#ccd5b7','#8ba192','#33005e','#1d2d36'];
document.querySelectorAll('.strip').forEach(s => s.innerHTML = palette.map(c => `<div style="background:${c}"></div>`).join(''));

// colour channels of the dialog
const channels = [['R','62',42,'#10005c,#3e0060 30%,#d80060'],['G','11',8,'#2c0058,#3c5560 40%,#40a868 65%,#48f070'],['B','111',75,'#38060c,#2c0030 40%,#3a00d8']];
document.getElementById('channels').innerHTML = channels.map(([n,v,x,g]) =>
  `<div class="d-flex" style="height:25px"><span style="width:25px;padding-top:5px">${n}</span><div class="position-relative" style="padding-top:8px"><div class="slide" style="background:linear-gradient(90deg,${g})"></div><svg class="knob" style="top:14px;left:${x}px"><path d="M6 .5l5 4.500v5H1V5z" fill="#ddd" stroke="#222"/></svg></div><div class="fld d-flex align-items-center" style="width:64px;margin-left:8px;padding:1px 0 0 5px">${v}</div></div>`).join('');

// swatch library
const rows = [
 ['none','reg','#fff','#000','#f00000','#ffff00','#00ff00','#00ffff','#0000ff','#f000f0','#b01228','#e1001e','#ee4026','#f28520','#f6a136'],
 ['#e8e020','#d2e024','#88cc40','#3cbc48','#049c40','#04682f','#2cc070','#10b094','#2aa6d8','#0870b8','#2e2882','#1c1058','#5a1880','#841282','#880050'],
 ['#b80050','#dc007c','#bca893','#8a7c6c','#665850','#46403c','#bc9060','#98704c','#785230','#5e4024','#4c2c14','#38200e','bars','dot','fade'],
 ['glow','fol']
];
const groups = [
 ['#000','#181818','#2a2a2a','#424242','#5c5c5c','#747474','#8e8e8e','#a8a8a8','#c4c4c4','#dedede','#eee'],
 ['#68642e','#b89c18','#a8a050','#e4ce60','#6c5ca8'],
 ['G#fbfef0','G#ccd5b7','G#8ba192','P','G#1d2d36']
];
const svg = s => `<svg viewBox="0 0 17 17">${s}</svg>`;
const special = {
 none: svg('<path fill="#f4f4f4" d="M0 0h17v17H0z"/><path d="M1 16L16 1" stroke="#c8102e" stroke-width="3"/>'),
 reg: svg('<path fill="#f0f0f0" d="M0 0h17v17H0z"/><g fill="none" stroke="#222" stroke-width="1.200"><circle cx="8.500" cy="8.500" r="6"/><circle cx="8.500" cy="8.500" r="2.800"/><path d="M8.500 0v17M0 8.500h17"/></g>'),
 bars: svg('<path fill="#ddd" d="M0 0h17v17H0z"/><path d="M1.500 0v17M4.500 0v17M7.500 0v17M10.500 0v17M13.500 0v17M16.300 0v17" stroke="#333" stroke-width="1.400"/>'),
 dot: svg('<path fill="#fff" d="M0 0h17v17H0z"/><circle cx="8.500" cy="8.500" r="6.800" fill="#988c7e"/>'),
 fade: '<i style="background:linear-gradient(90deg,#b08828,#e8c850 20%,#4a2070 50%,#502878 65%,#d05030)"></i>',
 glow: '<i style="background:radial-gradient(#e8a850,#6a4468 50%,#180838 80%)"></i>',
 fol: svg('<path fill="#e2e2e2" d="M0 0h17v17H0z"/><path d="M1 3l7 2 7-3M2 8l6-3 8 4M1 12l8-2 7 3M4 1l2 15M12 2l-2 13" fill="none" stroke="#999" stroke-width=".8"/>'),
 P: svg('<path fill="#f4f0f6" d="M0 0h17v17H0z"/><path fill="#2a0050" stroke="#111" d="M2 2h13v7l-6 6H2z"/>')
};
const folder = svg('<path d="M1 5q0-2 2-2h4l2 2h7v9H1z" fill="#b4b4b4"/><path d="M1 7h15" stroke="#999"/>');
const cell = c => special[c] || (c[0] === 'G' ? svg(`<path fill="${c.slice(1)}" d="M0 0h17v17H0z"/><path fill="#fff" d="M17 6v11H6z"/><path d="M17 6L6 17" stroke="#111"/>`) : `<i style="background:${c}"></i>`);
document.getElementById('grid').innerHTML =
 rows.map(r => `<div class="cells" style="margin-bottom:1.300px">${r.map(cell).join('')}</div>`).join('') +
 groups.map((g,i) => `<div class="cells" style="margin-top:${i ? 3.9 : 3.6}px">${folder}${g.map(cell).join('')}</div>`).join('');

// track each label to its set width
document.querySelectorAll('.fit').forEach(e => {
  const w = +e.dataset.w, n = e.textContent.length;
  const nat = e.offsetWidth;
  e.style.letterSpacing = ((w - nat) / (n - 1)) + 'px';
  e.style.width = w + 'px';
});
</script>
</body>
</html>
